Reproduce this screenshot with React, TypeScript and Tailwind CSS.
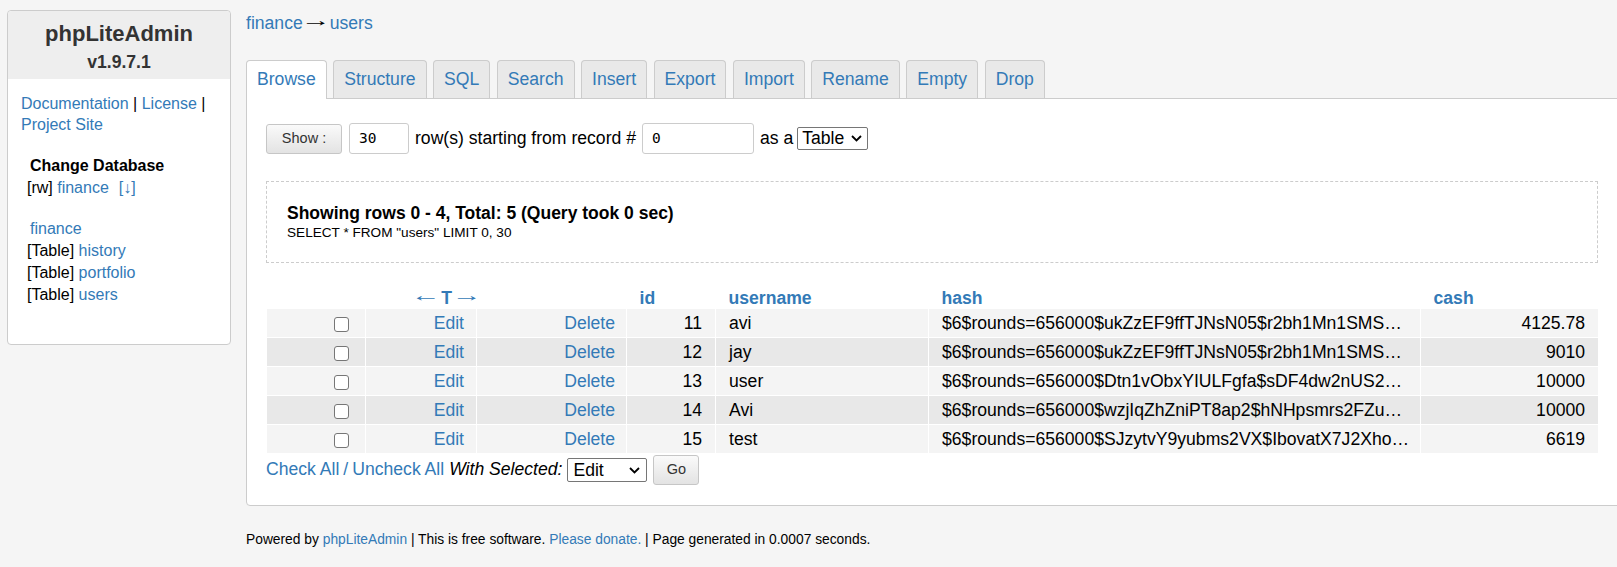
import React from "react";

const LINK = "text-[#337ab7]";

function Chevron() {
  return (
    <svg width="11" height="7" viewBox="0 0 11 7" className="shrink-0">
      <path d="M1 1l4.5 4.5L10 1" fill="none" stroke="#000" strokeWidth="1.8" />
    </svg>
  );
}

function Checkbox() {
  return (
    <span className="inline-block w-[15px] h-[15px] align-middle rounded-[3px] border border-[#767676] bg-white" />
  );
}

function Arrow({ ch, w }: { ch: string; w: string }) {
  return (
    <span className={`inline-block ${w} text-center font-normal`}>
      <span className="inline-block -translate-y-[3px] scale-x-[1.7]">{ch}</span>
    </span>
  );
}

const rows = [
  { id: 11, username: "avi", hash: "$6$rounds=656000$ukZzEF9ffTJNsN05$r2bh1Mn1SMS…", cash: "4125.78" },
  { id: 12, username: "jay", hash: "$6$rounds=656000$ukZzEF9ffTJNsN05$r2bh1Mn1SMS…", cash: "9010" },
  { id: 13, username: "user", hash: "$6$rounds=656000$Dtn1vObxYIULFgfa$sDF4dw2nUS2…", cash: "10000" },
  { id: 14, username: "Avi", hash: "$6$rounds=656000$wzjIqZhZniPT8ap2$hNHpsmrs2FZu…", cash: "10000" },
  { id: 15, username: "test", hash: "$6$rounds=656000$SJzytvY9yubms2VX$IbovatX7J2Xho…", cash: "6619" },
];

const tabs = ["Browse", "Structure", "SQL", "Search", "Insert", "Export", "Import", "Rename", "Empty", "Drop"];

export default function App() {
  return (
    <div className="min-h-screen w-full overflow-hidden bg-[#f5f5f5] font-['Liberation_Sans',Arial,sans-serif] text-black">
      <div className="flex items-start">
        {/* Sidebar */}
        <aside className="ml-[7px] mt-[10px] w-[224px] shrink-0 rounded-[4px] border border-[#cccccc] bg-white">
          <div className="rounded-t-[4px] bg-[#eeeeee] pt-[10px] pb-[6px] text-center font-bold text-[#333]">
            <div className="text-[22px] leading-[26px]">phpLiteAdmin</div>
            <div className="mt-[4px] text-[17.6px] leading-[22px]">v1.9.7.1</div>
          </div>
          <div className="px-[13px] pt-[14px] pb-[38px] text-[16px]">
            <div className="leading-[21px]">
              <a className={LINK}>Documentation</a> | <a className={LINK}>License</a> |{" "}
              <a className={LINK}>Project Site</a>
            </div>
            <div className="ml-[6px] mt-[20px] leading-[22px]">
              <div className="ml-[3px] font-bold">Change Database</div>
              <div>
                [rw] <a className={LINK}>finance</a>
                <a className={`${LINK} ml-[10px]`}>[↓]</a>
              </div>
            </div>
            <div className="ml-[6px] mt-[19px] leading-[22px]">
              <div className="ml-[3px]">
                <a className={LINK}>finance</a>
              </div>
              <div>
                [Table] <a className={LINK}>history</a>
              </div>
              <div>
                [Table] <a className={LINK}>portfolio</a>
              </div>
              <div>
                [Table] <a className={LINK}>users</a>
              </div>
            </div>
          </div>
        </aside>

        {/* Main */}
        <main className="ml-[15px] shrink-0 pt-[13px] text-[17.6px]">
          <div className="flex items-center leading-[20px]">
            <a className={LINK}>finance</a>
            <Arrow ch="→" w="w-[27px]" />
            <a className={LINK}>users</a>
          </div>

          {/* Tabs */}
          <div className="mt-[27px] flex items-end gap-[6.5px]">
            {tabs.map((t, i) =>
              i === 0 ? (
                <div
                  key={t}
                  className={`relative z-10 -mb-[1px] flex h-[39px] items-center rounded-t-[4px] border border-b-0 border-[#cccccc] bg-white px-[10px] pb-[1px] ${LINK}`}
                >
                  {t}
                </div>
              ) : (
                <div
                  key={t}
                  className={`flex h-[38px] items-center rounded-t-[4px] border border-b-0 border-[#cccccc] bg-[#e9e9e9] px-[10px] ${LINK}`}
                >
                  {t}
                </div>
              )
            )}
          </div>

          {/* Panel */}
          <div className="w-[1380px] rounded-b-[4px] border border-[#cccccc] bg-white pl-[19px] pt-[24px] pb-[20px]">
            {/* Show row */}
            <div className="flex h-[31px] items-center">
              <div className="flex h-[30px] w-[76px] items-center justify-center rounded-[3px] border border-[#c6c6c6] bg-gradient-to-b from-[#fafafa] to-[#e3e3e3] text-[14.5px] text-[#333]">
                Show :
              </div>
              <div className="ml-[7px] flex h-[31px] w-[60px] items-center rounded-[3px] border border-[#cccccc] bg-white pl-[9px] font-['DejaVu_Sans_Mono',monospace] text-[14.5px]">
                30
              </div>
              <span className="ml-[6px]">row(s) starting from record #</span>
              <div className="ml-[6px] flex h-[31px] w-[112px] items-center rounded-[3px] border border-[#cccccc] bg-white pl-[9px] font-['DejaVu_Sans_Mono',monospace] text-[14.5px]">
                0
              </div>
              <span className="ml-[6px]">as a</span>
              <div className="ml-[4px] flex h-[23px] w-[71px] items-center justify-between rounded-[2px] border border-[#767676] bg-white pl-[4px] pr-[5px]">
                <span>Table</span>
                <Chevron />
              </div>
            </div>

            {/* Info box */}
            <div className="mt-[27px] w-[1332px] border border-dashed border-[#cccccc] px-[20px] pt-[21px] pb-[20px]">
              <div className="text-[17.5px] font-bold leading-[21px]">
                Showing rows 0 - 4, Total: 5 (Query took 0 sec)
              </div>
              <div className="text-[13.6px] leading-[18px]">SELECT * FROM "users" LIMIT 0, 30</div>
            </div>

            {/* Table */}
            <table className="mt-[25px] w-[1332px] table-fixed border-collapse">
              <colgroup>
                <col className="w-[99px]" />
                <col className="w-[111px]" />
                <col className="w-[150px]" />
                <col className="w-[89px]" />
                <col className="w-[213px]" />
                <col className="w-[492px]" />
                <col className="w-[178px]" />
              </colgroup>
              <thead>
                <tr>
                  <th colSpan={3} className={`py-0 text-center font-bold leading-[20px] ${LINK}`}>
                    <Arrow ch="←" w="w-[22px]" />
                    <span className="mx-[4px]">T</span>
                    <Arrow ch="→" w="w-[22px]" />
                  </th>
                  <th className={`py-0 pl-[13px] text-left font-bold leading-[20px] ${LINK}`}>id</th>
                  <th className={`py-0 pl-[13px] text-left font-bold leading-[20px] ${LINK}`}>username</th>
                  <th className={`py-0 pl-[13px] text-left font-bold leading-[20px] ${LINK}`}>hash</th>
                  <th className={`py-0 pl-[13px] text-left font-bold leading-[20px] ${LINK}`}>cash</th>
                </tr>
              </thead>
              <tbody>
                {rows.map((r, i) => (
                  <tr key={r.id} className={i % 2 === 0 ? "bg-[#f4f4f4]" : "bg-[#e8e8e8]"}>
                    <td className="border border-white py-[4px] pr-[16px] text-right leading-[20px]">
                      <Checkbox />
                    </td>
                    <td className={`border border-white py-[4px] pr-[12px] text-right leading-[20px] ${LINK}`}>Edit</td>
                    <td className={`border border-white py-[4px] pr-[11px] text-right leading-[20px] ${LINK}`}>Delete</td>
                    <td className="border border-white py-[4px] pr-[13px] text-right leading-[20px]">{r.id}</td>
                    <td className="border border-white py-[4px] pl-[13px] text-left leading-[20px]">{r.username}</td>
                    <td className="overflow-hidden whitespace-nowrap border border-white py-[4px] pl-[13px] text-left leading-[20px]">
                      {r.hash}
                    </td>
                    <td className="border border-white py-[4px] pr-[13px] text-right leading-[20px]">{r.cash}</td>
                  </tr>
                ))}
              </tbody>
            </table>

            {/* Check all row */}
            <div className="mt-[1px] flex h-[30px] items-center">
              <div className="mb-[1px] flex items-center">
                <a className={LINK}>Check All</a>
                <span className={`mx-[4px] ${LINK}`}>/</span>
                <a className={LINK}>Uncheck All</a>
                <i className="ml-[5px]">With Selected:</i>
              </div>
              <div className="ml-[5px] flex h-[24px] w-[80px] items-center justify-between rounded-[2px] border border-[#767676] bg-white pl-[5px] pr-[6px]">
                <span>Edit</span>
                <Chevron />
              </div>
              <div className="ml-[6px] flex h-[30px] w-[46px] items-center justify-center rounded-[3px] border border-[#c6c6c6] bg-gradient-to-b from-[#fafafa] to-[#e3e3e3] text-[14.5px] text-[#333]">
                Go
              </div>
            </div>
          </div>

          {/* Footer */}
          <div className="mt-[26px] text-[13.8px] leading-[16px]">
            Powered by <a className={LINK}>phpLiteAdmin</a> | This is free software.{" "}
            <a className={LINK}>Please donate.</a> | Page generated in 0.0007 seconds.
          </div>
        </main>
      </div>
    </div>
  );
}
